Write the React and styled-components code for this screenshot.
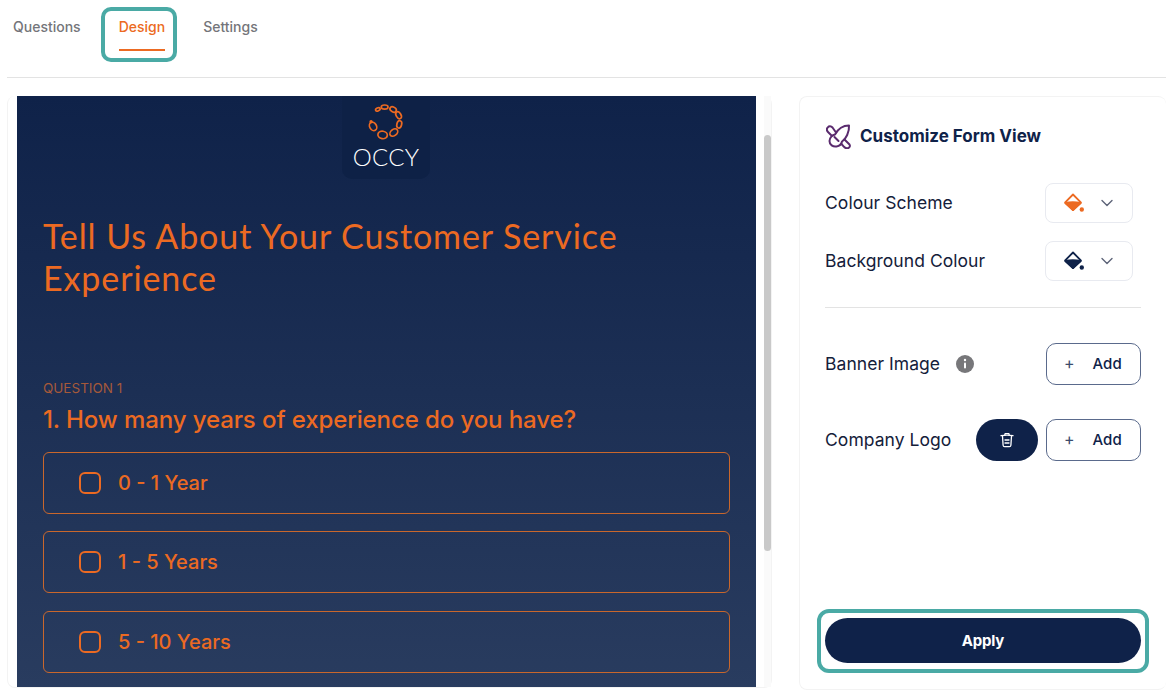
import React from "react"
import styled, { createGlobalStyle } from "styled-components"

const navy = "#0f2249"
const orange = "#ec6a22"
const teal = "#4aaaa5"

const GlobalStyle = createGlobalStyle`
  html, body {
    margin: 0;
    padding: 0;
    background: #fff;
    font-family: "Inter", "Open Sans", sans-serif;
  }
  *, *::before, *::after {
    box-sizing: border-box;
  }
`

const Page = styled.div`
  width: 1166px;
  height: 694px;
  overflow: hidden;
  padding-left: 7px;
  display: flex;
  flex-direction: column;
`

const TabBar = styled.nav`
  height: 78px;
  flex: none;
  display: flex;
  gap: 38px;
  padding-left: 6px;
  border-bottom: 1px solid #e3e3e3;
`

const Tab = styled.div`
  position: relative;
  height: 51px;
  padding-top: 17px;
  font-size: 14px;
  line-height: 20px;
  font-weight: 500;
  color: ${p => (p.$active ? orange : "#74757a")};
  border-bottom: 2px solid ${p => (p.$active ? orange : "transparent")};

  ${p => p.$active && `
    &::after {
      content: "";
      position: absolute;
      left: -18px;
      right: -12px;
      top: 7px;
      height: 55px;
      border: 4px solid ${teal};
      border-radius: 10px;
    }
  `}
`

const Body = styled.div`
  flex: 1;
  display: flex;
  gap: 27px;
  padding-top: 18px;
  padding-bottom: 4px;
  min-height: 0;
`

const PreviewCard = styled.section`
  width: 765px;
  height: 592px;
  flex: none;
  display: flex;
  padding-left: 9px;
  border: 1px solid #f3f3f3;
  border-top: none;
  border-radius: 8px;
`

const FormPreview = styled.div`
  width: 739px;
  height: 591px;
  flex: none;
  overflow: hidden;
  padding: 0 26px;
  background: linear-gradient(180deg, #0f2249 0%, #293c5f 100%);
`

const LogoBox = styled.div`
  width: 88px;
  height: 83px;
  margin-left: 299px;
  padding-top: 8px;
  display: flex;
  flex-direction: column;
  align-items: center;
  background: #0e2146;
  border-radius: 0 0 10px 10px;
`

const LogoText = styled.div`
  color: #fff;
  font-family: "Lato", sans-serif;
  font-size: 24px;
  line-height: 28px;
  font-weight: 300;
  letter-spacing: 0.3px;
  margin-top: 3px;
`

const FormTitle = styled.h1`
  margin: 36px 0 0;
  font-family: "Lato", sans-serif;
  font-size: 34px;
  line-height: 42px;
  font-weight: 400;
  color: ${orange};
  letter-spacing: 0.9px;
`

const QuestionTag = styled.div`
  margin-top: 80px;
  font-size: 13.5px;
  line-height: 18px;
  color: #a5593a;
`

const QuestionText = styled.h2`
  margin: 8px 0 17px;
  font-size: 24px;
  line-height: 30px;
  font-weight: 500;
  letter-spacing: -0.1px;
  color: ${orange};
`

const Option = styled.label`
  height: 62px;
  margin-bottom: 17.4px;
  display: flex;
  align-items: center;
  gap: 17px;
  padding-left: 35px;
  border: 1px solid #c9672c;
  border-radius: 6px;
  font-size: 20px;
  font-weight: 500;
  color: ${orange};
`

const Check = styled.span`
  width: 22px;
  height: 22px;
  border: 2px solid ${orange};
  border-radius: 6px;
`

const ScrollTrack = styled.div`
  width: 8px;
  margin-left: 8px;
  padding-top: 39px;
  background: #fafafa;
`

const ScrollThumb = styled.div`
  height: 416px;
  background: #c9c9c9;
  border-radius: 4px;
`

const SidePanel = styled.aside`
  width: 367px;
  height: 594px;
  flex: none;
  display: flex;
  flex-direction: column;
  padding: 26px 25px 26px 25px;
  border: 1px solid #f3f3f3;
  border-right: none;
  border-radius: 8px;
`

const PanelTitle = styled.div`
  height: 26px;
  display: flex;
  align-items: center;
  gap: 9px;
  padding-left: 1px;
  font-size: 17px;
  font-weight: 700;
  color: ${navy};
`

const Row = styled.div`
  display: flex;
  align-items: center;
  height: ${p => p.$h || 40}px;
  margin-top: ${p => p.$top}px;
  gap: 8px;
`

const RowLabel = styled.span`
  padding-bottom: 2px;
  font-size: 17.5px;
  letter-spacing: 0.05px;
  color: #14203a;
`

const Spacer = styled.span`
  flex: 1;
`

const InfoSlot = styled.span`
  display: flex;
  margin-left: 8px;
`

const Swatch = styled.button`
  width: 88px;
  height: 40px;
  margin-left: auto;
  margin-right: 8px;
  display: flex;
  align-items: center;
  gap: 14px;
  padding: 0 0 0 18px;
  background: #fff;
  border: 1.5px solid #e8eaf0;
  border-radius: 8px;
`

const Divider = styled.div`
  height: 1px;
  margin-top: 26px;
  background: #e3e3e3;
`

const AddButton = styled.button`
  width: 95px;
  height: 42px;
  flex: none;
  display: flex;
  align-items: center;
  gap: 18px;
  padding: 0 0 2px 17px;
  background: #fff;
  border: 1px solid #5a6a8c;
  border-radius: 10px;
  font-family: inherit;
  font-size: 15px;
  font-weight: 500;
  color: ${navy};
`

const PlusMark = styled.span`
  font-size: 16px;
  font-weight: 400;
  color: #3c4b6c;
`

const TrashButton = styled.button`
  width: 62px;
  height: 42px;
  flex: none;
  display: flex;
  align-items: center;
  justify-content: center;
  background: ${navy};
  border: none;
  border-radius: 21px;
`

const ApplyButton = styled.button`
  position: relative;
  height: 45px;
  margin-top: auto;
  background: ${navy};
  border: none;
  border-radius: 23px;
  font-family: inherit;
  font-size: 15px;
  font-weight: 700;
  letter-spacing: -0.2px;
  color: #fff;

  &::after {
    content: "";
    position: absolute;
    left: -8px;
    right: -8px;
    top: -9px;
    bottom: -10px;
    border: 4px solid ${teal};
    border-radius: 12px;
  }
`

const RingLogo = () => (
  <svg width="36" height="36" viewBox="145 42 106 106" fill="none" stroke={orange} strokeWidth="5">
    <ellipse cx="174" cy="58" rx="7" ry="4.500" transform="rotate(-25 174 58)" />
    <ellipse cx="194" cy="51" rx="10" ry="6" />
    <ellipse cx="219" cy="58" rx="10" ry="7" transform="rotate(30 219 58)" />
    <ellipse cx="235" cy="75" rx="11" ry="7" transform="rotate(60 235 75)" />
    <ellipse cx="237" cy="102" rx="11" ry="7" transform="rotate(105 237 102)" />
    <ellipse cx="221" cy="126" rx="13" ry="9" transform="rotate(140 221 126)" />
    <ellipse cx="188" cy="133" rx="14" ry="11" transform="rotate(10 188 133)" />
    <ellipse cx="160" cy="108" rx="13" ry="10" transform="rotate(60 160 108)" />
    <circle cx="154" cy="94" r="2.500" fill={orange} />
  </svg>
)

const BrushIcon = () => (
  <svg width="25" height="25" viewBox="6 5 25 25" fill="none" stroke="#5a2b6e" strokeWidth="2" strokeLinejoin="round" strokeLinecap="round">
    <path d="M29 6.500C23 6.500 18 10 15 15.500C12.500 16 9.500 18.500 9.500 22C9.500 26 13 28 16.500 27.500C19.500 27 21.500 25 22 22.500C26 20 29.500 13 29 6.500Z" />
    <path d="M16 13.500 12.500 8.500C11 6.800 9 6.800 7.800 8.300C6.500 9.800 6.500 11.500 8 13L11.500 16.500" />
    <path d="M24.500 20.500 29.500 25.500C30.500 27 29.500 29 27.500 29.300C26 29.500 25 28.800 24 27.800L21.500 25" />
    <path d="M14.500 18 18.500 22" />
  </svg>
)

const BucketIcon = ({ color }) => (
  <svg width="22" height="20" viewBox="0 0 22 20" fill="none">
    <path d="M9 1.500 16.800 9.300 9 17.100 1.200 9.300Z" stroke={color} strokeWidth="1.800" strokeLinejoin="round" />
    <path d="M1.200 10C6 9 11.500 9 16.800 10L9 17.100Z" fill={color} stroke={color} strokeWidth="1.800" strokeLinejoin="round" />
    <circle cx="17.800" cy="16.500" r="2.200" fill={color} />
  </svg>
)

const Chevron = () => (
  <svg width="14" height="14" viewBox="0 0 14 14" fill="none" stroke="#5d6478" strokeWidth="1.400" strokeLinecap="round" strokeLinejoin="round">
    <path d="M2 4.500 7 9.500 12 4.500" />
  </svg>
)

const InfoIcon = () => (
  <svg width="18" height="18" viewBox="0 0 18 18">
    <circle cx="9" cy="9" r="9" fill="#77777a" />
    <rect x="8" y="7.500" width="2" height="6" rx="1" fill="#fff" />
    <circle cx="9" cy="5" r="1.200" fill="#fff" />
  </svg>
)

const TrashIcon = () => (
  <svg width="16" height="16" viewBox="0 0 16 16" fill="none" stroke="#fff" strokeWidth="1.300" strokeLinecap="round" strokeLinejoin="round">
    <path d="M2 3.600C5.800 3 10.200 3 14 3.600" />
    <path d="M5.800 3 6.100 1.600H9.900L10.200 3" />
    <path d="M3.500 4 4.100 13.200C4.200 14.200 4.700 14.700 5.600 14.700H10.400C11.300 14.700 11.800 14.200 11.900 13.200L12.500 4" />
    <path d="M6 8H10M6 11H10" />
  </svg>
)

const options = ["0 - 1 Year", "1 - 5 Years", "5 - 10 Years"]

export default function App() {
  return (
    <Page>
      <GlobalStyle />
      <TabBar>
        <Tab>Questions</Tab>
        <Tab $active>Design</Tab>
        <Tab>Settings</Tab>
      </TabBar>
      <Body>
        <PreviewCard>
          <FormPreview>
            <LogoBox>
              <RingLogo />
              <LogoText>OCCY</LogoText>
            </LogoBox>
            <FormTitle>Tell Us About Your Customer Service Experience</FormTitle>
            <QuestionTag>QUESTION 1</QuestionTag>
            <QuestionText>1. How many years of experience do you have?</QuestionText>
            {options.map(o => (
              <Option key={o}>
                <Check />
                {o}
              </Option>
            ))}
          </FormPreview>
          <ScrollTrack>
            <ScrollThumb />
          </ScrollTrack>
        </PreviewCard>
        <SidePanel>
          <PanelTitle>
            <BrushIcon />
            Customize Form View
          </PanelTitle>
          <Row $top={34}>
            <RowLabel>Colour Scheme</RowLabel>
            <Swatch>
              <BucketIcon color={orange} />
              <Chevron />
            </Swatch>
          </Row>
          <Row $top={18}>
            <RowLabel>Background Colour</RowLabel>
            <Swatch>
              <BucketIcon color={navy} />
              <Chevron />
            </Swatch>
          </Row>
          <Divider />
          <Row $top={35} $h={42}>
            <RowLabel>Banner Image</RowLabel>
            <InfoSlot>
              <InfoIcon />
            </InfoSlot>
            <Spacer />
            <AddButton>
              <PlusMark>+</PlusMark>
              Add
            </AddButton>
          </Row>
          <Row $top={34} $h={42}>
            <RowLabel>Company Logo</RowLabel>
            <Spacer />
            <TrashButton>
              <TrashIcon />
            </TrashButton>
            <AddButton>
              <PlusMark>+</PlusMark>
              Add
            </AddButton>
          </Row>
          <ApplyButton>Apply</ApplyButton>
        </SidePanel>
      </Body>
    </Page>
  )
}
